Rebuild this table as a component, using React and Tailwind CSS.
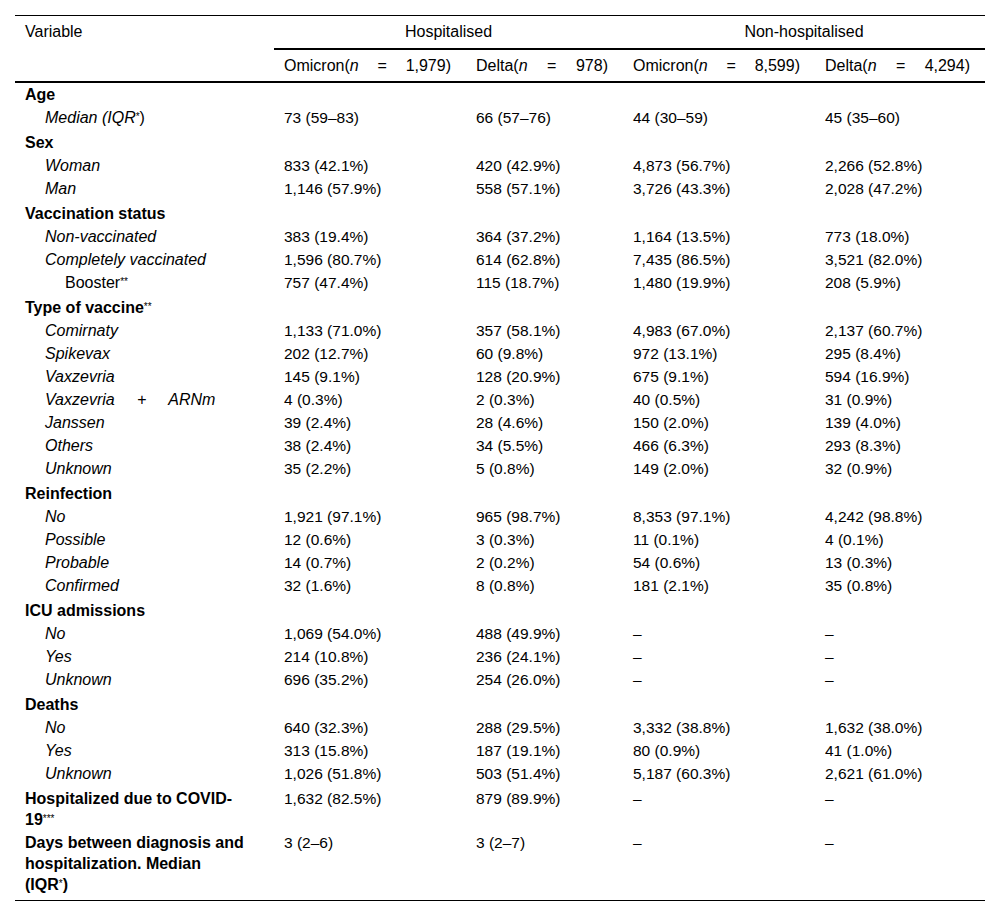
const rows = [
  { label: "Age", kind: "group", first: true },
  { label: "Median (IQR", star: "*", close: ")", kind: "sub", v: ["73 (59–83)", "66 (57–76)", "44 (30–59)", "45 (35–60)"] },
  { label: "Sex", kind: "group" },
  { label: "Woman", kind: "sub", v: ["833 (42.1%)", "420 (42.9%)", "4,873 (56.7%)", "2,266 (52.8%)"] },
  { label: "Man", kind: "sub", v: ["1,146 (57.9%)", "558 (57.1%)", "3,726 (43.3%)", "2,028 (47.2%)"] },
  { label: "Vaccination status", kind: "group" },
  { label: "Non-vaccinated", kind: "sub", v: ["383 (19.4%)", "364 (37.2%)", "1,164 (13.5%)", "773 (18.0%)"] },
  { label: "Completely vaccinated", kind: "sub", v: ["1,596 (80.7%)", "614 (62.8%)", "7,435 (86.5%)", "3,521 (82.0%)"] },
  { label: "Booster", star: "**", kind: "subsub", v: ["757 (47.4%)", "115 (18.7%)", "1,480 (19.9%)", "208 (5.9%)"] },
  { label: "Type of vaccine", star: "**", kind: "group" },
  { label: "Comirnaty", kind: "sub", v: ["1,133 (71.0%)", "357 (58.1%)", "4,983 (67.0%)", "2,137 (60.7%)"] },
  { label: "Spikevax", kind: "sub", v: ["202 (12.7%)", "60 (9.8%)", "972 (13.1%)", "295 (8.4%)"] },
  { label: "Vaxzevria", kind: "sub", v: ["145 (9.1%)", "128 (20.9%)", "675 (9.1%)", "594 (16.9%)"] },
  { label: "Vaxzevria + ARNm", kind: "sub", wide: true, v: ["4 (0.3%)", "2 (0.3%)", "40 (0.5%)", "31 (0.9%)"] },
  { label: "Janssen", kind: "sub", v: ["39 (2.4%)", "28 (4.6%)", "150 (2.0%)", "139 (4.0%)"] },
  { label: "Others", kind: "sub", v: ["38 (2.4%)", "34 (5.5%)", "466 (6.3%)", "293 (8.3%)"] },
  { label: "Unknown", kind: "sub", v: ["35 (2.2%)", "5 (0.8%)", "149 (2.0%)", "32 (0.9%)"] },
  { label: "Reinfection", kind: "group" },
  { label: "No", kind: "sub", v: ["1,921 (97.1%)", "965 (98.7%)", "8,353 (97.1%)", "4,242 (98.8%)"] },
  { label: "Possible", kind: "sub", v: ["12 (0.6%)", "3 (0.3%)", "11 (0.1%)", "4 (0.1%)"] },
  { label: "Probable", kind: "sub", v: ["14 (0.7%)", "2 (0.2%)", "54 (0.6%)", "13 (0.3%)"] },
  { label: "Confirmed", kind: "sub", v: ["32 (1.6%)", "8 (0.8%)", "181 (2.1%)", "35 (0.8%)"] },
  { label: "ICU admissions", kind: "group" },
  { label: "No", kind: "sub", v: ["1,069 (54.0%)", "488 (49.9%)", "–", "–"] },
  { label: "Yes", kind: "sub", v: ["214 (10.8%)", "236 (24.1%)", "–", "–"] },
  { label: "Unknown", kind: "sub", v: ["696 (35.2%)", "254 (26.0%)", "–", "–"] },
  { label: "Deaths", kind: "group" },
  { label: "No", kind: "sub", v: ["640 (32.3%)", "288 (29.5%)", "3,332 (38.8%)", "1,632 (38.0%)"] },
  { label: "Yes", kind: "sub", v: ["313 (15.8%)", "187 (19.1%)", "80 (0.9%)", "41 (1.0%)"] },
  { label: "Unknown", kind: "sub", v: ["1,026 (51.8%)", "503 (51.4%)", "5,187 (60.3%)", "2,621 (61.0%)"] },
  { label: "Hospitalized due to COVID-19", star: "***", kind: "group", v: ["1,632 (82.5%)", "879 (89.9%)", "–", "–"] },
  { label: "Days between diagnosis and hospitalization. Median (IQR", star: "*", close: ")", kind: "last", v: ["3 (2–6)", "3 (2–7)", "–", "–"] },
];

// little raised asterisks used for the footnote marks
function Star({ s }) {
  return <span className="font-normal not-italic text-[10px] leading-none relative -top-[3px]">{s}</span>;
}

function padFor(r) {
  if (r.first) return "pt-px pb-px";
  if (r.kind === "group") return "pt-[3px] pb-px";
  if (r.kind === "last") return "pt-px pb-[5px]";
  return "py-px";
}

function Label({ r }) {
  const bold = r.kind === "group" || r.kind === "last";
  const italic = r.kind === "sub";
  const indent = r.kind === "sub" ? "pl-[30px]" : r.kind === "subsub" ? "pl-[50px]" : "pl-[10px]";
  return (
    <td className={`${indent} pr-[28px] align-top ${padFor(r)}`}>
      <span className={`${bold ? "font-bold" : ""} ${italic ? "italic" : ""} ${r.wide ? "[word-spacing:18px]" : ""}`}>
        {r.label}
      </span>
      {r.star && <Star s={r.star} />}
      {r.close && <span className={bold ? "font-bold" : ""}>{r.close}</span>}
    </td>
  );
}

function HeadCell({ name, n }) {
  return (
    <th className="font-normal pl-[10px] pr-[15px] pt-[5px] pb-[5px] text-justify [text-align-last:justify]">
      {name}(<i>n</i> = {n})
    </th>
  );
}

export default function App() {
  return (
    <div className="bg-white min-h-screen pt-[15px] px-[15px] text-black text-[16px] leading-[21px] font-['Liberation_Sans',Arial,sans-serif]">
      <table className="w-[970px] table-fixed border-collapse">
        <colgroup>
          <col className="w-[259px]" />
          <col className="w-[192px]" />
          <col className="w-[157px]" />
          <col className="w-[192px]" />
          <col className="w-[170px]" />
        </colgroup>
        <thead>
          <tr className="border-t border-black">
            <th rowSpan={2} className="font-normal text-left align-top pl-[10px] pt-[5px]">Variable</th>
            <th colSpan={2} className="font-normal text-center pt-[5px] pb-[6px] border-b-[2px] border-black">Hospitalised</th>
            <th colSpan={2} className="font-normal text-center pt-[5px] pb-[6px] border-b-[2px] border-black">Non-hospitalised</th>
          </tr>
          <tr className="border-b-[2px] border-black">
            <HeadCell name="Omicron" n="1,979" />
            <HeadCell name="Delta" n="978" />
            <HeadCell name="Omicron" n="8,599" />
            <HeadCell name="Delta" n="4,294" />
          </tr>
        </thead>
        <tbody>
          {rows.map((r, i) => (
            <tr key={i} className={r.kind === "last" ? "border-b border-black" : ""}>
              <Label r={r} />
              {[0, 1, 2, 3].map((j) => (
                <td key={j} className={`pl-[10px] pr-[15px] align-top whitespace-nowrap text-[15.5px] ${padFor(r)}`}>
                  {r.v ? r.v[j] : ""}
                </td>
              ))}
            </tr>
          ))}
        </tbody>
      </table>
    </div>
  );
}
